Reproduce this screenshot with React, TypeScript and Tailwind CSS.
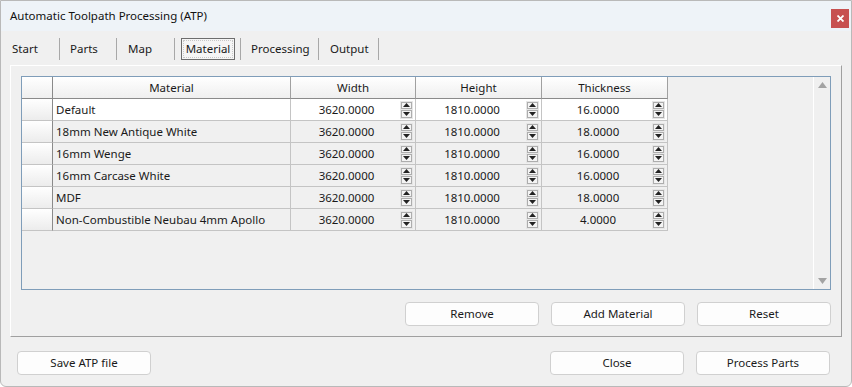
type Row = { name: string; width: string; height: string; thick: string };

const rows: Row[] = [
  { name: "Default", width: "3620.0000", height: "1810.0000", thick: "16.0000" },
  { name: "18mm New Antique White", width: "3620.0000", height: "1810.0000", thick: "18.0000" },
  { name: "16mm Wenge", width: "3620.0000", height: "1810.0000", thick: "16.0000" },
  { name: "16mm Carcase White", width: "3620.0000", height: "1810.0000", thick: "16.0000" },
  { name: "MDF", width: "3620.0000", height: "1810.0000", thick: "18.0000" },
  { name: "Non-Combustible Neubau 4mm Apollo", width: "3620.0000", height: "1810.0000", thick: "4.0000" },
];

function Tri({ up }: { up?: boolean }) {
  return (
    <svg width="7" height="4" viewBox="0 0 7 4">
      {up ? <polygon points="0,4 7,4 3.5,0" fill="#222" /> : <polygon points="0,0 7,0 3.5,4" fill="#222" />}
    </svg>
  );
}

function Spinner() {
  return (
    <div className="flex flex-col w-[13px] h-[18px] bg-[#e6e6e6] p-[1px] gap-[1px] mr-[2px]">
      <div className="flex-1 flex items-center justify-center border border-[#adadad] bg-[#f4f4f4]">
        <Tri up />
      </div>
      <div className="flex-1 flex items-center justify-center border border-[#adadad] bg-[#f4f4f4]">
        <Tri />
      </div>
    </div>
  );
}

function NumCell({ value, w }: { value: string; w: string }) {
  return (
    <div className={`${w} flex items-center border-r border-[#c4c4c4]`}>
      <span className="flex-1 text-center pl-[2px]">{value}</span>
      <Spinner />
    </div>
  );
}

function Btn({ label }: { label: string }) {
  return (
    <button className="w-[134px] h-[24px] rounded-[4px] border border-[#d0d0d0] bg-[#fdfdfd] text-[11.5px] text-[#1a1a1a]">
      {label}
    </button>
  );
}

const tabs = [
  { label: "Start", w: "w-[59px]", pl: "pl-[11px]" },
  { label: "Parts", w: "w-[57px]", pl: "pl-[10px]" },
  { label: "Map", w: "w-[58px]", pl: "pl-[11px]" },
  { label: "Material", w: "w-[66px]", pl: "pl-[6px]", active: true },
  { label: "Processing", w: "w-[78px]", pl: "pl-[10px]" },
  { label: "Output", w: "w-[60px]", pl: "pl-[11px]" },
];

const headers = [
  ["Material", "w-[238px]"],
  ["Width", "w-[125px]"],
  ["Height", "w-[126px]"],
  ["Thickness", "w-[126px]"],
];

export default function App() {
  return (
    <div
      className="w-[852px] h-[387px] bg-[#f0f0f0] border border-[#b9b9b9] rounded-b-[6px] flex flex-col text-[11.5px] text-[#1a1a1a] overflow-hidden"
      style={{ fontFamily: "'Noto Sans', 'Open Sans', sans-serif" }}
    >
      {/* title bar */}
      <div className="h-[30px] bg-[#eef3f8] flex items-center justify-between pl-[9px] pr-[2px] shrink-0">
        <span className="text-[11.5px] text-[#111]">Automatic Toolpath Processing (ATP)</span>
        <div className="w-[18px] h-[19px] bg-[#c75050] flex items-center justify-center mt-[5px]">
          <svg width="7" height="7" viewBox="0 0 7 7">
            <path d="M0.5 0.5 L6.5 6.5 M6.5 0.5 L0.5 6.5" stroke="white" strokeWidth="1.8" />
          </svg>
        </div>
      </div>

      {/* tabs */}
      <div className="h-[34px] flex items-center shrink-0 pt-[1px]">
        {tabs.map((t) => (
          <div key={t.label} className={`${t.w} h-[22px] flex items-center border-r border-[#a8a8a8] ${t.pl}`}>
            {t.active ? (
              <div className="h-[22px] w-[54px] border border-[#6d6d6d] p-[1px] bg-[#f5f5f5]">
                <div className="h-full w-full border border-dotted border-[#c8c8c8] flex items-center justify-center">
                  {t.label}
                </div>
              </div>
            ) : (
              <span>{t.label}</span>
            )}
          </div>
        ))}
      </div>

      {/* panel */}
      <div className="mx-[9px] h-[272px] border-t border-l border-white border-r border-b border-r-[#a0a0a0] border-b-[#a0a0a0] flex flex-col pt-[10px] px-[10px] shrink-0">
        <div className="w-[810px] h-[214px] border border-[#7f9db9] flex">
          <div className="flex-1 flex flex-col">
            {/* header */}
            <div className="flex h-[22px]">
              <div className="w-[31px] border-r border-b border-[#8a8a8a] bg-gradient-to-b from-white to-[#efefef]" />
              {headers.map(([h, w]) => (
                <div
                  key={h}
                  className={`${w} border-r border-r-[#a0a0a0] border-b border-b-[#8a8a8a] bg-gradient-to-b from-white to-[#efefef] flex items-center justify-center`}
                >
                  {h}
                </div>
              ))}
            </div>
            {rows.map((r, i) => (
              <div key={r.name} className="flex h-[22px]">
                <div className="w-[31px] border-r border-[#8a8a8a] border-b border-b-[#c4c4c4] bg-gradient-to-b from-white to-[#ececec]" />
                <div className={`flex border-b border-[#c4c4c4] ${i === 0 ? "bg-white" : "bg-[#f0f0f0]"}`}>
                  <div className="w-[238px] flex items-center pl-[3px] border-r border-[#c4c4c4]">{r.name}</div>
                  <NumCell value={r.width} w="w-[125px]" />
                  <NumCell value={r.height} w="w-[126px]" />
                  <NumCell value={r.thick} w="w-[126px]" />
                </div>
              </div>
            ))}
          </div>
          {/* scrollbar */}
          <div className="w-[17px] border-l border-white flex flex-col justify-between items-center py-[5px]">
            <svg width="9" height="6" viewBox="0 0 9 6">
              <polygon points="0,6 9,6 4.5,0" fill="#a3a3a3" />
            </svg>
            <svg width="9" height="6" viewBox="0 0 9 6">
              <polygon points="0,0 9,0 4.5,6" fill="#a3a3a3" />
            </svg>
          </div>
        </div>
        <div className="flex justify-end gap-[12px] mt-[12px]">
          <Btn label="Remove" />
          <Btn label="Add Material" />
          <Btn label="Reset" />
        </div>
      </div>

      {/* footer */}
      <div className="flex items-center mt-[14px] pl-[16px] pr-[21px]">
        <Btn label="Save ATP file" />
        <div className="flex-1" />
        <div className="flex gap-[12px]">
          <Btn label="Close" />
          <Btn label="Process Parts" />
        </div>
      </div>
    </div>
  );
}
